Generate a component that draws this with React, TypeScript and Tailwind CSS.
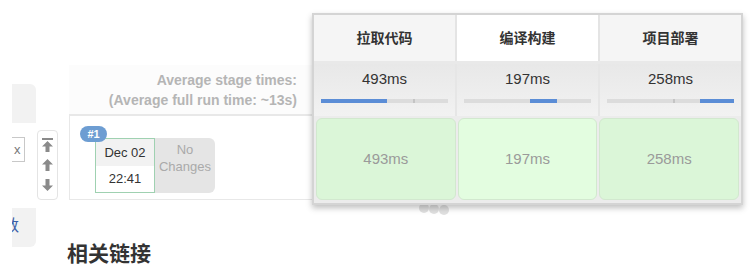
const font = { fontFamily: '"Liberation Sans", "Noto Sans CJK SC", sans-serif' }

interface Stage {
  name: string
  avg: string
  start: number
  fill: number
  tick: number
  hovered?: boolean
}

const stages: Stage[] = [
  { name: '拉取代码', avg: '493ms', start: 0, fill: 66, tick: 92 },
  { name: '编译构建', avg: '197ms', start: 66, fill: 27, tick: 0, hovered: true },
  { name: '项目部署', avg: '258ms', start: 93, fill: 34, tick: 66 },
]

function Bar({ s }: { s: Stage }) {
  return (
    <div className="relative h-[4px] w-[127px] bg-[#dcdcdc] mx-auto">
      {s.tick > 0 && <div className="absolute top-0 h-[4px] w-[2px] bg-[#c4c4c4]" style={{ left: s.tick }} />}
      <div className="absolute top-0 h-[4px] bg-[#5b8dd6]" style={{ left: s.start, width: s.fill }} />
    </div>
  )
}

function Sidebar() {
  return (
    <div className="ml-3 mt-[84px] w-6 flex flex-col">
      <div className="h-[39px] bg-[#f2f2f2] rounded-tr-md" />
      <div className="h-[85px] bg-white pt-[14px]">
        <div className="h-[25px] w-[13px] border border-l-0 border-[#c8c8c8] text-[13px] text-[#777] leading-[23px] pl-[2px]">x</div>
      </div>
      <div className="h-[39px] bg-[#f2f2f2] rounded-br-md overflow-hidden">
        <div className="-ml-[9px] text-[16px] text-[#3a5fa8] leading-[36px]">数</div>
      </div>
    </div>
  )
}

function ArrowIcon({ bar, down }: { bar?: boolean; down?: boolean }) {
  return (
    <svg width="11" height="14" viewBox="0 0 11 14" fill="#8a8a8a" className={down ? 'rotate-180' : ''}>
      {bar && <rect x="0" y="0" width="11" height="2" />}
      <polygon points={bar ? '5.5,3 11,8.5 7.5,8.5 7.5,14 3.5,14 3.5,8.5 0,8.5' : '5.5,1 11,6.5 7.5,6.5 7.5,13 3.5,13 3.5,6.5 0,6.5'} />
    </svg>
  )
}

function Arrows() {
  return (
    <div className="ml-px mt-[130px] w-[21px] h-[70px] border border-[#e4e4e4] rounded-sm flex flex-col items-center pt-[7px] gap-[6px]">
      <ArrowIcon bar />
      <ArrowIcon />
      <ArrowIcon down />
    </div>
  )
}

function BuildCard() {
  return (
    <div className="relative flex ml-[25px] mt-[22px]">
      <div className="absolute -left-[15px] -top-[12px] h-[16px] w-[27px] rounded-full bg-[#6d9dd2] text-white text-[11px] font-bold leading-[16px] text-center z-10">
        #1
      </div>
      <div className="w-[60px] h-[55px] border border-[#9fd1b1] flex flex-col text-[13px] text-[#333]">
        <div className="h-[27px] bg-[#f2f2f2] text-center leading-[27px]">Dec 02</div>
        <div className="flex-1 bg-white text-center leading-[26px]">22:41</div>
      </div>
      <div className="w-[60px] h-[55px] bg-[#e5e5e5] rounded-r-md text-[13px] text-[#aaa] text-center leading-[17px] pt-[3px]">
        No
        <br />
        Changes
      </div>
    </div>
  )
}

function StageTable() {
  return (
    <div className="relative z-10 w-[431px] border-2 border-[#d4d4d4] bg-[#e6e6e6] shadow-[0_3px_6px_rgba(0,0,0,0.25)]">
      <div className="flex gap-[2px] bg-[#e4e4e4]">
        {stages.map((s) => (
          <div
            key={s.name}
            className={`flex-1 h-[46px] flex items-center justify-center text-[14px] font-bold text-[#333] ${s.hovered ? 'bg-white' : 'bg-[#f5f5f5]'}`}
          >
            {s.name}
          </div>
        ))}
      </div>
      <div className="flex gap-[2px] border-t-[3px] border-[#e9e9e9]">
        {stages.map((s) => (
          <div key={s.name} className="flex-1 h-[52px] bg-gradient-to-b from-[#e8e8e8] to-[#f2f2f2] pt-[5px]">
            <div className="text-center text-[15px] text-[#333] leading-[20px] mb-[10px]">{s.avg}</div>
            <Bar s={s} />
          </div>
        ))}
      </div>
      <div className="flex gap-[2px] bg-[#ececec] px-[2px] pt-[2px] pb-[3px]">
        {stages.map((s) => (
          <div
            key={s.name}
            className={`flex-1 h-[82px] rounded-md border border-[#d2e8cf] flex items-center justify-center text-[15px] text-[#9a9a9a] ${s.hovered ? 'bg-[#e3fde0]' : 'bg-[#dbf6d8]'}`}
          >
            {s.avg}
          </div>
        ))}
      </div>
    </div>
  )
}

export default function App() {
  return (
    <div className="relative w-[755px] h-[270px] bg-white overflow-hidden flex items-start" style={font}>
      <Sidebar />
      <Arrows />
      <div className="ml-[11px] mt-[13px] flex flex-col">
        <div className="flex items-start">
          <div className="w-[243px] mt-[52px]">
            <div className="h-[51px] bg-[#fcfcfc] border-b-2 border-[#e8e8e8] text-right pr-[15px] text-[14px] font-bold text-[#b5b5b5] leading-[20px] pt-[5px]">
              Average stage times:
              <br />
              (Average full run time: ~13s)
            </div>
            <div className="h-[84px] border-l border-b border-[#e8e8e8] flex items-start">
              <BuildCard />
            </div>
          </div>
          <StageTable />
        </div>
        <div className="mt-[36px] -ml-[2px] text-[21px] font-bold text-[#333] leading-[26px]">相关链接</div>
      </div>
      <svg className="absolute left-[412px] top-[150px]" width="70" height="70" viewBox="0 0 70 70">
        <g fill="#c8c8c8" opacity="0.55">
          <circle cx="12" cy="58" r="5" />
          <circle cx="22" cy="59" r="5" />
          <circle cx="32" cy="60" r="5" />
        </g>
      </svg>
    </div>
  )
}
